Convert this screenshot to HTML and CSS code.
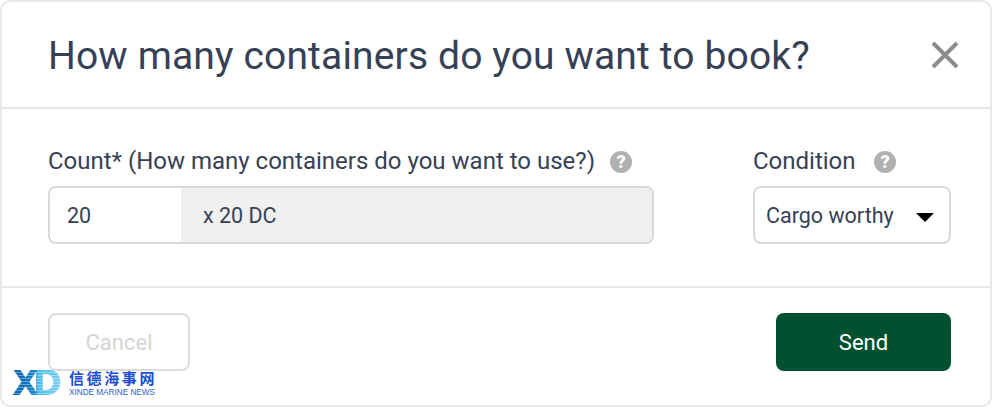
FILE: index.html
```html
<!DOCTYPE html>
<html lang="en">
<head>
<meta charset="utf-8">
<title>Book containers</title>
<link rel="stylesheet" href="styles.css">
</head>
<body>
<div class="modal">
  <header class="modal-head">
    <h1 class="title">How many containers do you want to book?</h1>
    <svg class="close" viewBox="0 0 28 28" width="28" height="28" aria-label="Close"><path d="M2 2 26 26M26 2 2 26" fill="none" stroke="#8c8c8c" stroke-width="4"/></svg>
  </header>
  <section class="modal-body">
    <div class="field field-count">
      <div class="label">Count* (How many containers do you want to use?)<svg class="help" viewBox="0 0 22 22" width="22" height="22"><circle cx="11" cy="11" r="11" fill="#b0b0b0"/><text x="11" y="17" text-anchor="middle" class="help-mark">?</text></svg></div>
      <div class="count-box">
        <div class="count-input">20</div>
        <div class="count-unit">x 20 DC</div>
      </div>
    </div>
    <div class="field field-cond">
      <div class="label">Condition<svg class="help help-cond" viewBox="0 0 22 22" width="22" height="22"><circle cx="11" cy="11" r="11" fill="#b0b0b0"/><text x="11" y="17" text-anchor="middle" class="help-mark">?</text></svg></div>
      <div class="select"><span>Cargo worthy</span><i class="caret"></i></div>
    </div>
  </section>
  <footer class="modal-foot">
    <button class="btn btn-cancel">Cancel</button>
    <button class="btn btn-send">Send</button>
  </footer>
</div>
<div class="watermark">
  <div class="wm-logo">XD</div>
  <div class="wm-text">
    <div class="wm-cn">信德海事网</div>
    <div class="wm-en">XINDE MARINE NEWS</div>
  </div>
</div>
</body>
</html>
```
FILE: styles.css
```css
* { box-sizing: border-box; }
html, body { margin: 0; padding: 0; }
body {
  width: 992px;
  height: 408px;
  background: #fff;
  font-family: Roboto, "Liberation Sans", sans-serif;
  color: #364156;
  position: relative;
  overflow: hidden;
}
.modal {
  width: 992px;
  height: 407px;
  border: 2px solid #e8e8ef;
  border-radius: 10px;
  background: #fff;
  display: flex;
  flex-direction: column;
}
.modal-head {
  height: 107px;
  flex: none;
  display: flex;
  align-items: center;
  justify-content: space-between;
  padding: 0 31px 0 46px;
  border-bottom: 2px solid #e8e8ea;
}
.title {
  margin: 2px 0 0;
  font-size: 39px;
  font-weight: 400;
  line-height: 48px;
  letter-spacing: 0.15px;
  white-space: nowrap;
}
.close { display: block; }
.modal-body {
  height: 179px;
  flex: none;
  display: flex;
  justify-content: space-between;
  padding: 38px 39px 0 46px;
  border-bottom: 2px solid #e8e8ea;
}
.field { display: flex; flex-direction: column; }
.label {
  height: 28px;
  display: flex;
  align-items: center;
  font-size: 24px;
  line-height: 28px;
  white-space: nowrap;
}
.help { margin-left: 15px; flex: none; margin-top: 2px; }
.help-cond { margin-left: 18px; }
.help-mark { font: 900 18px Roboto, sans-serif; fill: #fff; }
.count-box {
  margin-top: 11px;
  width: 606px;
  height: 58px;
  border: 2px solid #d9d9d9;
  border-radius: 8px;
  display: flex;
  overflow: hidden;
  font-size: 21.5px;
}
.count-input {
  width: 131px;
  display: flex;
  align-items: center;
  padding-left: 17px;
  background: #fff;
}
.count-unit {
  flex: 1;
  display: flex;
  align-items: center;
  padding-left: 22px;
  background: #f0f0f0;
}
.select {
  margin-top: 11px;
  width: 198px;
  height: 58px;
  border: 2px solid #d9d9d9;
  border-radius: 8px;
  display: flex;
  align-items: center;
  justify-content: space-between;
  padding: 0 15px 0 11px;
  font-size: 21.5px;
}
.caret {
  width: 0;
  height: 0;
  margin-top: 4px;
  border-left: 9px solid transparent;
  border-right: 9px solid transparent;
  border-top: 9px solid #000;
}
.modal-foot {
  flex: 1;
  display: flex;
  justify-content: space-between;
  align-items: flex-start;
  padding: 25px 39px 0 46px;
}
.btn {
  height: 58px;
  border-radius: 8px;
  font-family: inherit;
  font-size: 22px;
  padding: 0;
}
.btn-cancel {
  width: 142px;
  background: #fff;
  border: 2px solid #dcdcdc;
  color: #d4d4d4;
}
.btn-send {
  width: 175px;
  background: #005130;
  border: 0;
  color: #fff;
}
.watermark {
  position: absolute;
  left: 12px;
  top: 369px;
  display: flex;
  gap: 7px;
}
.wm-logo {
  width: 50px;
  margin-top: 1px;
  font: 700 35px/27px "DejaVu Sans", sans-serif;
  letter-spacing: -6px;
  white-space: nowrap;
  background-image:
    repeating-linear-gradient(180deg, transparent 0 2px, rgba(255,255,255,.35) 2px 3px),
    linear-gradient(90deg, #0b5fa8 0%, #1a86c8 48%, #4fbcea 52%, #7fd3f2 100%);
  -webkit-background-clip: text;
  background-clip: text;
  color: transparent;
}
.wm-text { display: flex; flex-direction: column; margin-top: -1px; }
.wm-cn {
  font: 700 15px/19px "Noto Sans CJK SC", sans-serif;
  letter-spacing: 2.6px;
  color: #1a4fd0;
}
.wm-en {
  font: 400 8.2px/12px "Liberation Sans", sans-serif;
  color: #2a5fc8;
  white-space: nowrap;
}
```
